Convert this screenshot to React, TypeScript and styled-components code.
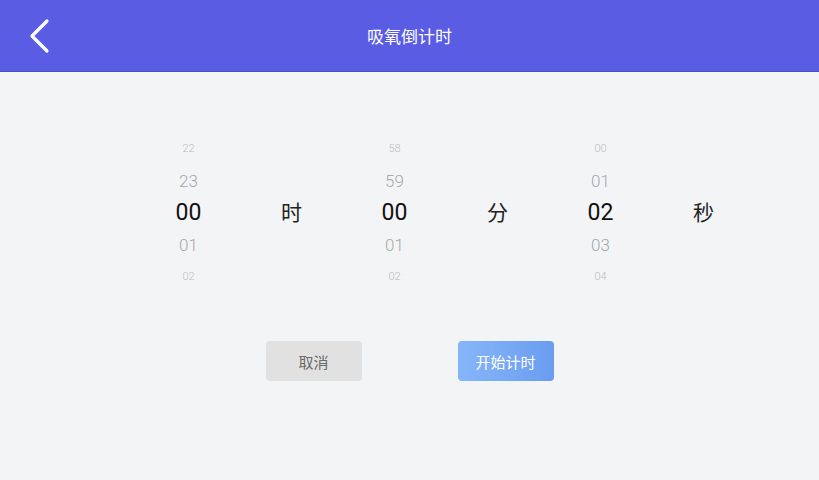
import React from "react";
import styled, { createGlobalStyle } from "styled-components";

const Global = createGlobalStyle`
  html, body { margin: 0; padding: 0; background: #f3f4f6; }
  body { font-family: Roboto, "Noto Sans CJK SC", sans-serif; }
`;

const Page = styled.div`
  width: 819px;
  height: 480px;
  background: #f3f4f6;
  display: flex;
  flex-direction: column;
`;

const Header = styled.header`
  height: 71px;
  background: #5a5ce3;
  border-bottom: 1px solid #4a4bc4;
  display: grid;
  grid-template-columns: 80px 1fr 80px;
  align-items: center;
  flex-shrink: 0;
`;

const BackButton = styled.div`
  display: flex;
  align-items: center;
  padding-left: 28px;
  height: 100%;
`;

const Title = styled.h1`
  margin: 0;
  text-align: center;
  color: #ffffff;
  font-size: 17px;
  font-weight: 400;
  font-family: "Noto Sans CJK SC", sans-serif;
`;

const Picker = styled.div`
  margin-top: 61px;
  margin-left: 137px;
  display: grid;
  grid-template-columns: repeat(6, 103px);
`;

const Column = styled.div`
  display: flex;
  flex-direction: column;
  align-items: center;
`;

const Cell = styled.div<{ $level: number }>`
  height: 32px;
  line-height: 32px;
  text-align: center;
  font-family: Roboto, sans-serif;
  font-weight: ${(p) => (p.$level === 0 ? 400 : 300)};
  font-size: ${(p) => (p.$level === 0 ? 23 : p.$level === 1 ? 17 : 11)}px;
  color: ${(p) => (p.$level === 0 ? "#111111" : p.$level === 1 ? "#a8a8a8" : "#bdbdbd")};
`;

const Label = styled.div`
  height: 156px;
  display: flex;
  align-items: center;
  justify-content: center;
  font-size: 21px;
  color: #222222;
  font-family: "Noto Sans CJK SC", sans-serif;
`;

const Buttons = styled.div`
  margin-top: 48px;
  display: flex;
  justify-content: center;
  gap: 96px;
`;

const Button = styled.button<{ $primary?: boolean }>`
  width: 96px;
  height: 40px;
  border: none;
  border-radius: 4px;
  font-size: 15px;
  font-family: "Noto Sans CJK SC", sans-serif;
  background: ${(p) => (p.$primary ? "linear-gradient(90deg, #86b6f9, #6a9df0)" : "#e1e1e1")};
  color: ${(p) => (p.$primary ? "#ffffff" : "#6b6b6b")};
  padding: 0;
`;

const columns: { values: string[]; label: string }[] = [
  { values: ["22", "23", "00", "01", "02"], label: "时" },
  { values: ["58", "59", "00", "01", "02"], label: "分" },
  { values: ["00", "01", "02", "03", "04"], label: "秒" },
];

export default function App() {
  return (
    <Page>
      <Global />
      <Header>
        <BackButton>
          <svg width="24" height="36" viewBox="0 0 24 36">
            <polyline
              points="19,3 4,18 19,33"
              fill="none"
              stroke="#ffffff"
              strokeWidth="3.2"
              strokeLinecap="round"
              strokeLinejoin="round"
            />
          </svg>
        </BackButton>
        <Title>吸氧倒计时</Title>
        <div />
      </Header>
      <Picker>
        {columns.map((c) => (
          <React.Fragment key={c.label}>
            <Column>
              {c.values.map((v, i) => (
                <Cell key={i} $level={Math.abs(i - 2)}>
                  {v}
                </Cell>
              ))}
            </Column>
            <Label>{c.label}</Label>
          </React.Fragment>
        ))}
      </Picker>
      <Buttons>
        <Button>取消</Button>
        <Button $primary>开始计时</Button>
      </Buttons>
    </Page>
  );
}
